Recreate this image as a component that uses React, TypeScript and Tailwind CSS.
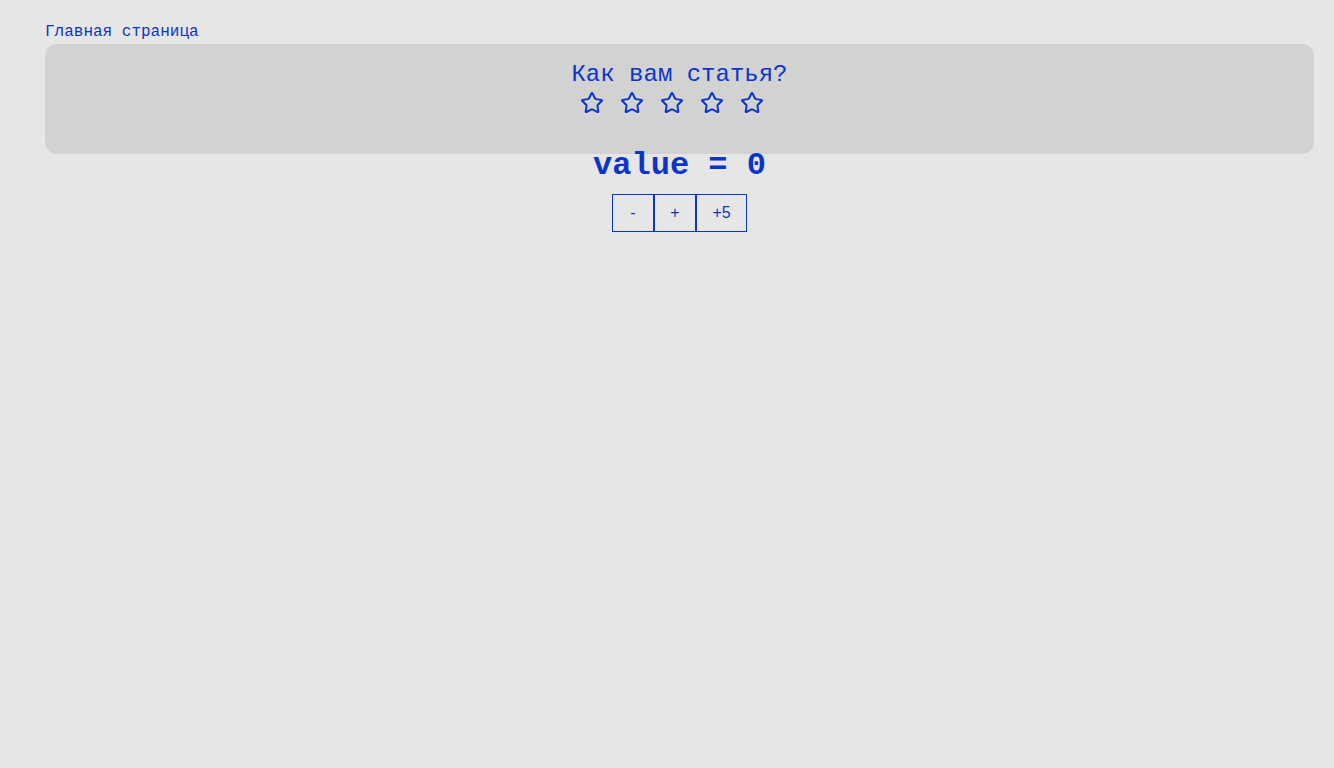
import { useState } from 'react';
import { Star } from 'lucide-react';

const mono = { fontFamily: '"Liberation Mono", "Courier New", monospace' };

export default function App() {
  const [value, setValue] = useState(0);
  const [rating, setRating] = useState(0);

  return (
    <div className="min-h-screen bg-[#e6e6e6] pl-[45px] pr-[20px] pt-5 text-[#0b35c9]" style={mono}>
      <a href="#" className="block text-base leading-6">Главная страница</a>

      {/* Rating card */}
      <div className="h-[110px] rounded-xl bg-[#d2d2d2] pt-[15px] flex flex-col items-center">
        <h2 className="text-2xl leading-8">Как вам статья?</h2>
        <div className="flex">
          {[1, 2, 3, 4, 5].map((i) => (
            <button key={i} onClick={() => setRating(i)} className="block mr-4">
              <Star
                size={24}
                strokeWidth={2}
                className="text-[#0b35c9]"
                fill={i <= rating ? 'currentColor' : 'none'}
              />
            </button>
          ))}
        </div>
      </div>

      {/* Counter */}
      <div className="flex flex-col items-center">
        <h1 className="-mt-[6px] text-[32px] leading-9 font-bold">value = {value}</h1>
        <div className="mt-[10px] flex" style={{ fontFamily: '"Liberation Sans", Arial, sans-serif' }}>
          <button
            onClick={() => setValue(value - 1)}
            className="w-[42px] h-[38px] border border-[#0b35c9] flex items-center justify-center text-base"
          >
            -
          </button>
          <button
            onClick={() => setValue(value + 1)}
            className="w-[42px] h-[38px] border border-[#0b35c9] flex items-center justify-center text-base"
          >
            +
          </button>
          <button
            onClick={() => setValue(value + 5)}
            className="w-[51px] h-[38px] border border-[#0b35c9] flex items-center justify-center text-base"
          >
            +5
          </button>
        </div>
      </div>
    </div>
  );
}
